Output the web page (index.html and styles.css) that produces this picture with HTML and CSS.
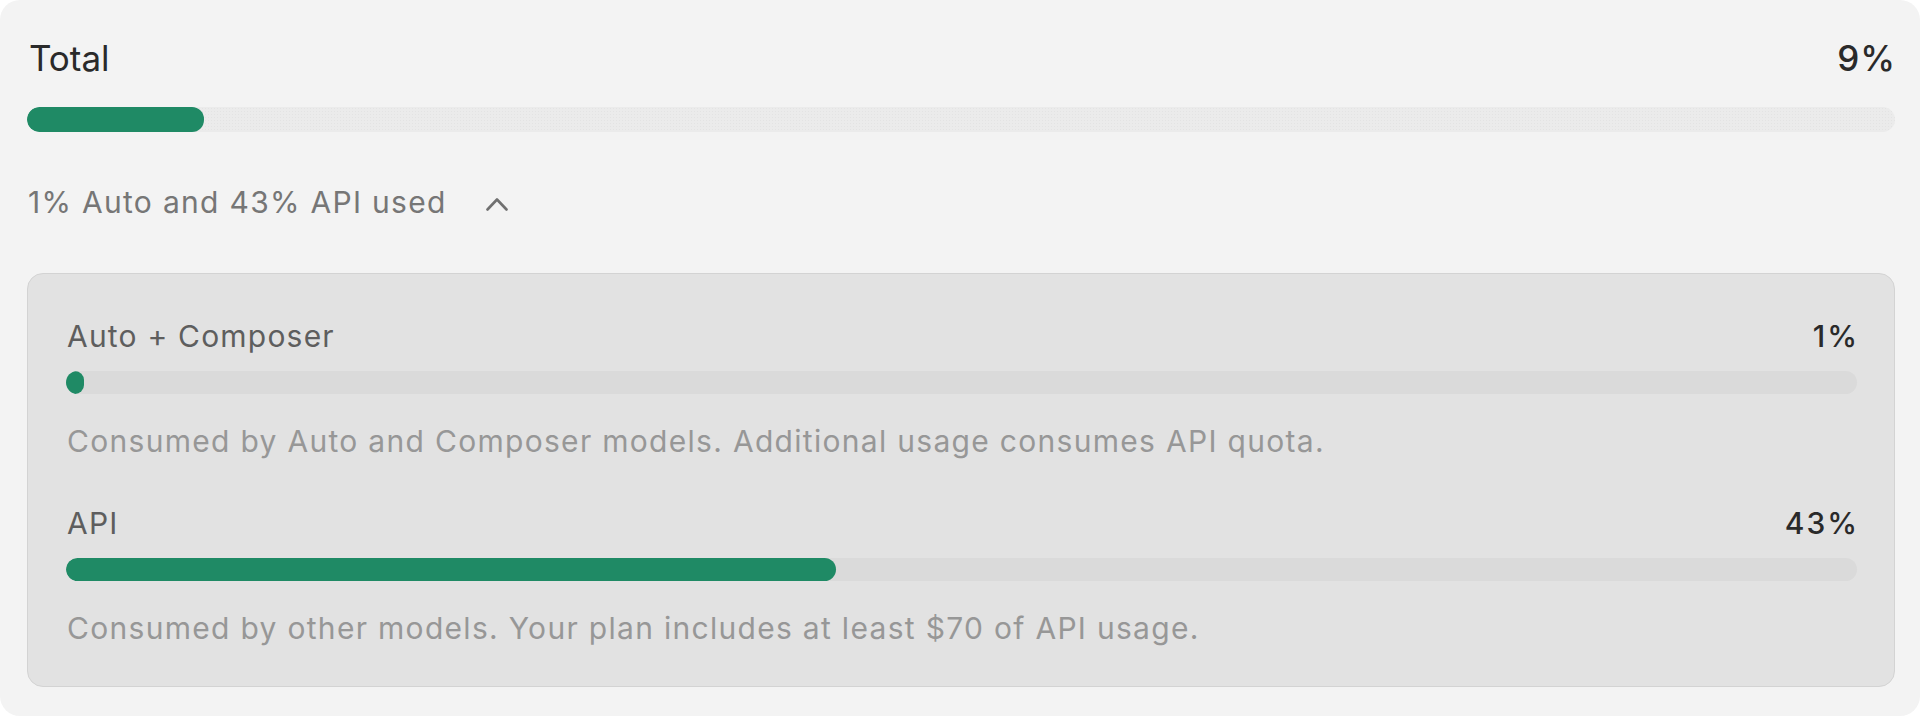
FILE: index.html
```html
<!DOCTYPE html>
<html lang="en">
<head>
<meta charset="utf-8">
<title>Usage</title>
<link rel="stylesheet" href="styles.css">
</head>
<body>
<div class="panel">
  <div class="head">
    <span class="title">Total</span>
    <span class="value">9%</span>
  </div>
  <div class="track track-main"><div class="fill" style="width:9.5%"></div></div>
  <div class="summary">
    <span class="summary-text">1% Auto and 43% API used</span>
    <svg class="chev" width="22" height="14" viewBox="0 0 22 14"><polyline points="1.5,12.5 11,2.5 20.5,12.5" fill="none" stroke="#707070" stroke-width="2.6" stroke-linecap="round" stroke-linejoin="round"/></svg>
  </div>
  <div class="card">
    <div class="item">
      <div class="head">
        <span class="label">Auto + Composer</span>
        <span class="pct">1%</span>
      </div>
      <div class="track"><div class="fill" style="width:1%"></div></div>
      <p class="desc">Consumed by Auto and Composer models. Additional usage consumes API quota.</p>
    </div>
    <div class="item">
      <div class="head">
        <span class="label">API</span>
        <span class="pct">43%</span>
      </div>
      <div class="track"><div class="fill" style="width:43%"></div></div>
      <p class="desc">Consumed by other models. Your plan includes at least $70 of API usage.</p>
    </div>
  </div>
</div>
</body>
</html>
```
FILE: styles.css
```css
html, body {
  margin: 0;
  padding: 0;
  background: #ffffff;
}
body {
  font-family: Inter, "Noto Sans", "Liberation Sans", sans-serif;
}
.panel {
  box-sizing: border-box;
  height: 716px;
  background: #f3f3f3;
  border-radius: 20px;
  padding: 37px 25px 0 27px;
}
.head {
  display: flex;
  justify-content: space-between;
  align-items: baseline;
}
.title {
  font-size: 35px;
  line-height: 42px;
  color: #2a2a2a;
  padding-left: 2px;
}
.value {
  font-size: 35px;
  line-height: 42px;
  color: #2a2a2a;
  font-weight: 500;
  letter-spacing: 1px;
  margin-right: -1px;
}
.track {
  height: 23px;
  border-radius: 12px;
  background: #dadada;
  overflow: hidden;
}
.track-main {
  margin-top: 28px;
  height: 25px;
  border-radius: 13px;
  background-color: #ebebeb;
  background-image: radial-gradient(circle, #e3e3e3 0.6px, transparent 0.9px);
  background-size: 3px 3px;
}
.fill {
  height: 100%;
  background: #1f8a65;
  border-radius: 12px;
}
.summary {
  margin-top: 52px;
  display: flex;
  align-items: center;
  gap: 39px;
  font-size: 30px;
  line-height: 36px;
  color: #767676;
  padding-left: 1px;
}
.summary-text {
  letter-spacing: 1.3px;
}
.chev {
  display: block;
  margin-top: 4px;
}
.card {
  margin-top: 53px;
  box-sizing: border-box;
  height: 414px;
  background: #e2e2e2;
  border: 1.5px solid #d3d3d3;
  border-radius: 16px;
  padding: 44px 37px 0 38px;
  display: flex;
  flex-direction: column;
  gap: 46px;
}
.label {
  font-size: 30px;
  line-height: 36px;
  color: #5e5e5e;
  padding-left: 1px;
  letter-spacing: 1.2px;
}
.pct {
  font-size: 30px;
  line-height: 36px;
  color: #2a2a2a;
  font-weight: 500;
  letter-spacing: 2px;
  margin-right: -2px;
}
.item .track {
  margin-top: 17px;
}
.desc {
  margin: 29px 0 0;
  font-size: 30px;
  line-height: 36px;
  color: #979797;
  padding-left: 1px;
  letter-spacing: 1.3px;
}
```
